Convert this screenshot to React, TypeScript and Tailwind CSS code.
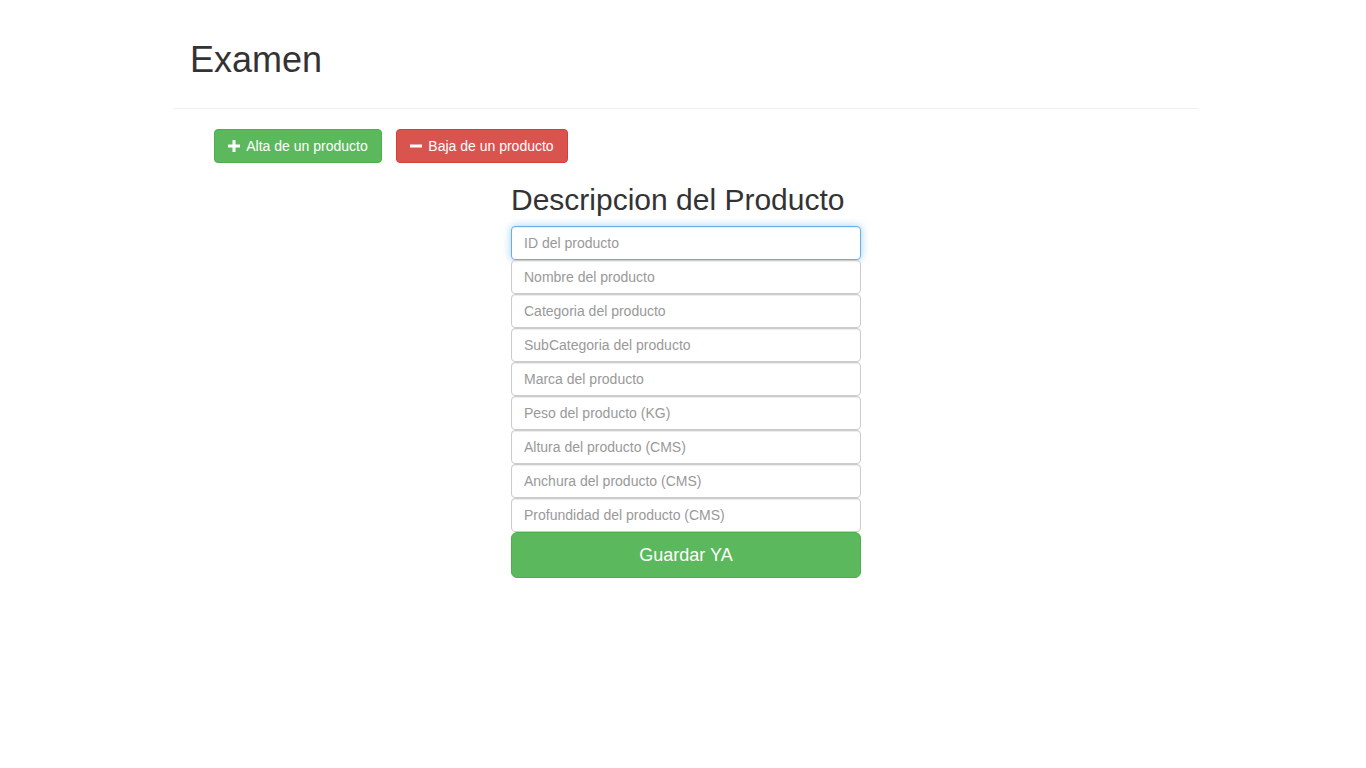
const fields = [
  "ID del producto",
  "Nombre del producto",
  "Categoria del producto",
  "SubCategoria del producto",
  "Marca del producto",
  "Peso del producto (KG)",
  "Altura del producto (CMS)",
  "Anchura del producto (CMS)",
  "Profundidad del producto (CMS)",
];

const PlusIcon = () => (
  <svg width="12" height="12" viewBox="0 0 12 12" className="shrink-0">
    <path d="M4.5 0h3v4.5H12v3H7.5V12h-3V7.5H0v-3h4.5z" fill="white" />
  </svg>
);

const MinusIcon = () => (
  <svg width="12" height="12" viewBox="0 0 12 12" className="shrink-0">
    <path d="M0 4.5h12v3H0z" fill="white" />
  </svg>
);

export default function App() {
  return (
    <div className="min-h-screen bg-white text-[#333] font-['Liberation_Sans',Arial,sans-serif]">
      <div className="ml-[174px] w-[1024px]">
        {/* Header */}
        <div className="pt-[40px] pb-[28px] border-b border-[#eee] px-4">
          <h1 className="text-[36px] leading-[40px] font-normal">Examen</h1>
        </div>

        {/* Actions */}
        <div className="flex gap-[14px] mt-[20px] pl-[40px]">
          <button className="flex items-center justify-center gap-[6px] w-[168px] h-[34px] text-[14px] leading-[20px] text-white bg-[#5cb85c] border border-[#4cae4c] rounded-[4px]">
            <PlusIcon />
            Alta de un producto
          </button>
          <button className="flex items-center justify-center gap-[6px] w-[172px] h-[34px] text-[14px] leading-[20px] text-white bg-[#d9534f] border border-[#d43f3a] rounded-[4px]">
            <MinusIcon />
            Baja de un producto
          </button>
        </div>

        {/* Form */}
        <div className="ml-[337px] w-[350px]">
          <h2 className="mt-[20px] mb-[10px] text-[30px] leading-[33px] font-normal">
            Descripcion del Producto
          </h2>
          <div className="flex flex-col">
            {fields.map((f, i) => (
              <input
                key={f}
                type="text"
                placeholder={f}
                className={
                  i === 0
                    ? "h-[34px] w-full px-[12px] text-[14px] text-[#555] placeholder:text-[#999] bg-white border border-[#66afe9] rounded-[4px] outline-none shadow-[inset_0_1px_1px_rgba(0,0,0,0.075),0_0_8px_rgba(102,175,233,0.6)]"
                    : "h-[34px] w-full px-[12px] text-[14px] text-[#555] placeholder:text-[#999] bg-white border border-[#ccc] rounded-[4px] outline-none shadow-[inset_0_1px_1px_rgba(0,0,0,0.075)]"
                }
              />
            ))}
            <button className="h-[46px] w-full text-[18px] leading-[24px] text-white bg-[#5cb85c] border border-[#4cae4c] rounded-[6px]">
              Guardar YA
            </button>
          </div>
        </div>
      </div>
    </div>
  );
}
